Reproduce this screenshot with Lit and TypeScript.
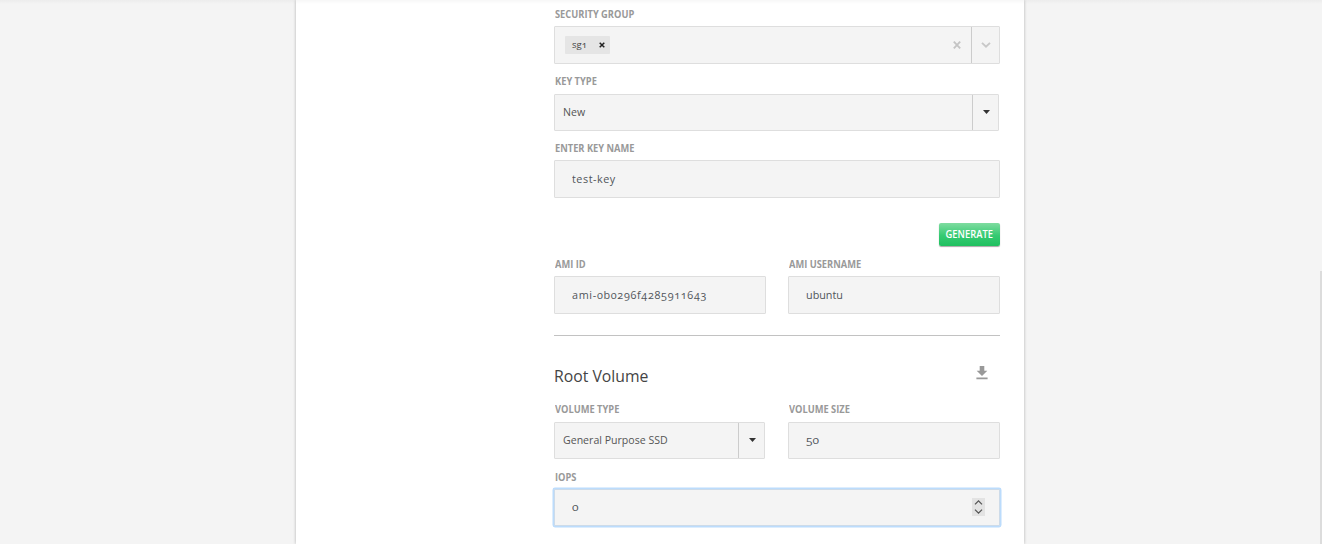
import { LitElement, html, css } from "lit";
import { customElement } from "lit/decorators.js";

const caret = html`<svg class="caret" width="7" height="4" viewBox="0 0 7 4"><path d="M0 0h7L3.5 4z" fill="#333" /></svg>`;

@customElement("app-root")
export class AppRoot extends LitElement {
  static styles = css`
    * { box-sizing: border-box; }
    :host {
      display: flex;
      justify-content: center;
      position: relative;
      width: 1322px;
      height: 544px;
      overflow: hidden;
      background: #f4f4f4;
      font-family: "Open Sans", "Noto Sans", sans-serif;
      font-variant-numeric: oldstyle-nums;
      color: #555;
    }
    .shade {
      position: absolute;
      inset: 0 0 auto 0;
      height: 4px;
      background: linear-gradient(rgba(0, 0, 0, 0.03), rgba(0, 0, 0, 0));
    }
    .thumb {
      position: absolute;
      right: 0;
      top: 271px;
      width: 2px;
      bottom: 0;
      background: #dcdcdc;
    }
    .sheet {
      width: 728px;
      margin-right: 2px;
      height: 544px;
      padding: 8px 24px 0 258px;
      background: #fff;
      box-shadow: 0 0 3px rgba(0, 0, 0, 0.28);
    }
    .label {
      height: 12px;
      padding-left: 0.5px;
      font-size: 10px;
      line-height: 13px;
      font-weight: 700;
      color: #999;
      white-space: nowrap;
    }
    .label span, .txt { display: inline-block; transform-origin: 0 50%; white-space: nowrap; }
    .label span { transform: scaleX(0.93); }
    .txt { transform: scaleX(0.92); }
    .field { display: flex; flex-direction: column; gap: 6px; }
    .box {
      display: flex;
      align-items: center;
      height: 38px;
      border: 1px solid #dedede;
      border-radius: 1px;
      background: #f4f4f4;
      font-size: 11.5px;
      line-height: 16px;
    }
    .input { padding: 0 14px 0 16.5px; color: #50545a; }
    .input .txt { transform: scaleX(0.94); }
    .input .id { letter-spacing: 0.72px; }
    .input .key { letter-spacing: 0.55px; }
    .input .num { transform: scaleX(1.04); }
    .select { height: 37px; width: calc(100% - 1px); padding-left: 8px; }
    .select .txt, .short .txt, .focus .txt { margin-top: -2px; }
    .fill { flex: 1; }
    .arrow {
      display: flex;
      align-items: center;
      justify-content: center;
      width: 26px;
      height: 100%;
      border-left: 1px solid #ccc;
    }
    .arrow .caret { margin: -1px 0 0 1px; }
    .arrow.wide { width: 28px; }
    .multi { padding-left: 10px; }
    .tag {
      display: flex;
      align-items: center;
      justify-content: space-between;
      width: 45px;
      height: 18px;
      padding: 0 5.5px 0 7px;
      border-radius: 1px;
      background: #e5e5e5;
      font-size: 9.5px;
      color: #444;
    }
    .clear { margin-right: 10px; }
    .keytype { margin-top: 11px; }
    .keytype .field { gap: 7px; }
    .keyname { margin-top: 11px; }
    .actions { display: flex; justify-content: flex-end; margin-top: 25px; }
    .button {
      display: flex;
      align-items: center;
      justify-content: center;
      width: 61px;
      height: 23px;
      padding: 0 0 1px;
      border: 0;
      border-radius: 2px;
      background: linear-gradient(#7fdca0, #35ca72 55%, #1fc05f);
      box-shadow: 0 1px 1px rgba(0, 0, 0, 0.35);
      color: #fff;
      font: 600 10px/14px "Open Sans", "Noto Sans", sans-serif;
    }
    .button span { transform: scaleX(0.94); white-space: nowrap; }
    .row { display: grid; grid-template-columns: 212px 212px; gap: 22px; }
    .ami { margin-top: 12px; }
    .rule { height: 1px; margin-top: 21px; background: #c2c2c2; }
    .head { display: flex; justify-content: space-between; align-items: center; height: 24px; margin-top: 28px; }
    .title { margin: 0; font-size: 16.5px; line-height: 24px; font-weight: 400; color: #444; }
    .title .txt { transform: scaleX(0.955); }
    .download { margin: -7px 12px 0 0; }
    .volume { margin-top: 15px; }
    .volume .field { gap: 7px; }
    .short { height: 37px; }
    .iops { margin-top: 12px; }
    .focus { height: 37px; box-shadow: 0 0 0 1.5px #bcdcfc; border-color: #cddbe9; }
    .spin { flex: none; background: #e3e3e3; margin-top: -1px; }
    svg { display: block; }
  `;

  private label(text: string) {
    return html`<div class="label"><span>${text}</span></div>`;
  }

  private input(name: string, value: string, box = "", text = "") {
    return html`<div class="field">
      ${this.label(name)}
      <div class="box input ${box}"><span class="txt ${text}">${value}</span></div>
    </div>`;
  }

  private select(name: string, value: string) {
    return html`<div class="field">
      ${this.label(name)}
      <div class="box select"><span class="txt">${value}</span><span class="fill"></span><span class="arrow">${caret}</span></div>
    </div>`;
  }

  render() {
    return html`
      <main class="sheet">
        <div class="field">
          ${this.label("SECURITY GROUP")}
          <div class="box multi">
            <span class="tag"><span>sg1</span>
              <svg width="6" height="6" viewBox="0 0 6 6"><path d="M.7.7l4.6 4.6M5.3.7L.7 5.3" stroke="#222" stroke-width="1.5" /></svg>
            </span>
            <span class="fill"></span>
            <svg class="clear" width="8" height="8" viewBox="0 0 8 8"><path d="M.8.6l6.4 6.8M7.2.6L.8 7.4" stroke="#c4c4c4" stroke-width="1.8" /></svg>
            <span class="arrow wide">
              <svg width="10" height="6" viewBox="0 0 10 6"><path d="M1 .9l4 3.8L9 .9" fill="none" stroke="#c8c8c8" stroke-width="1.9" /></svg>
            </span>
          </div>
        </div>
        <div class="keytype">${this.select("KEY TYPE", "New")}</div>
        <div class="keyname">${this.input("ENTER KEY NAME", "test-key", "", "key")}</div>
        <div class="actions"><button class="button"><span>GENERATE</span></button></div>
        <div class="row ami">
          ${this.input("AMI ID", "ami-0b0296f4285911643", "", "id")}
          ${this.input("AMI USERNAME", "ubuntu")}
        </div>
        <div class="rule"></div>
        <div class="head">
          <h2 class="title"><span class="txt">Root Volume</span></h2>
          <svg class="download" width="12" height="14" viewBox="0 0 12 14"><path d="M3.7 0h4.6v4.8h3L6 10 .7 4.8h3zM.4 11.4h11.2v1.8H.4z" fill="#999" /></svg>
        </div>
        <div class="row volume">
          ${this.select("VOLUME TYPE", "General Purpose SSD")}
          ${this.input("VOLUME SIZE", "50", "short", "num")}
        </div>
        <div class="field iops">
          ${this.label("IOPS")}
          <div class="box input focus">
            <span class="txt num">0</span><span class="fill"></span>
            <svg class="spin" width="13" height="18" viewBox="0 0 13 18"><path d="M3 6.4l3.5-3.5L10 6.4M3 11.6l3.5 3.5 3.5-3.5" fill="none" stroke="#555" stroke-width="1.3" /></svg>
          </div>
        </div>
      </main>
      <div class="shade"></div>
      <div class="thumb"></div>
    `;
  }
}
